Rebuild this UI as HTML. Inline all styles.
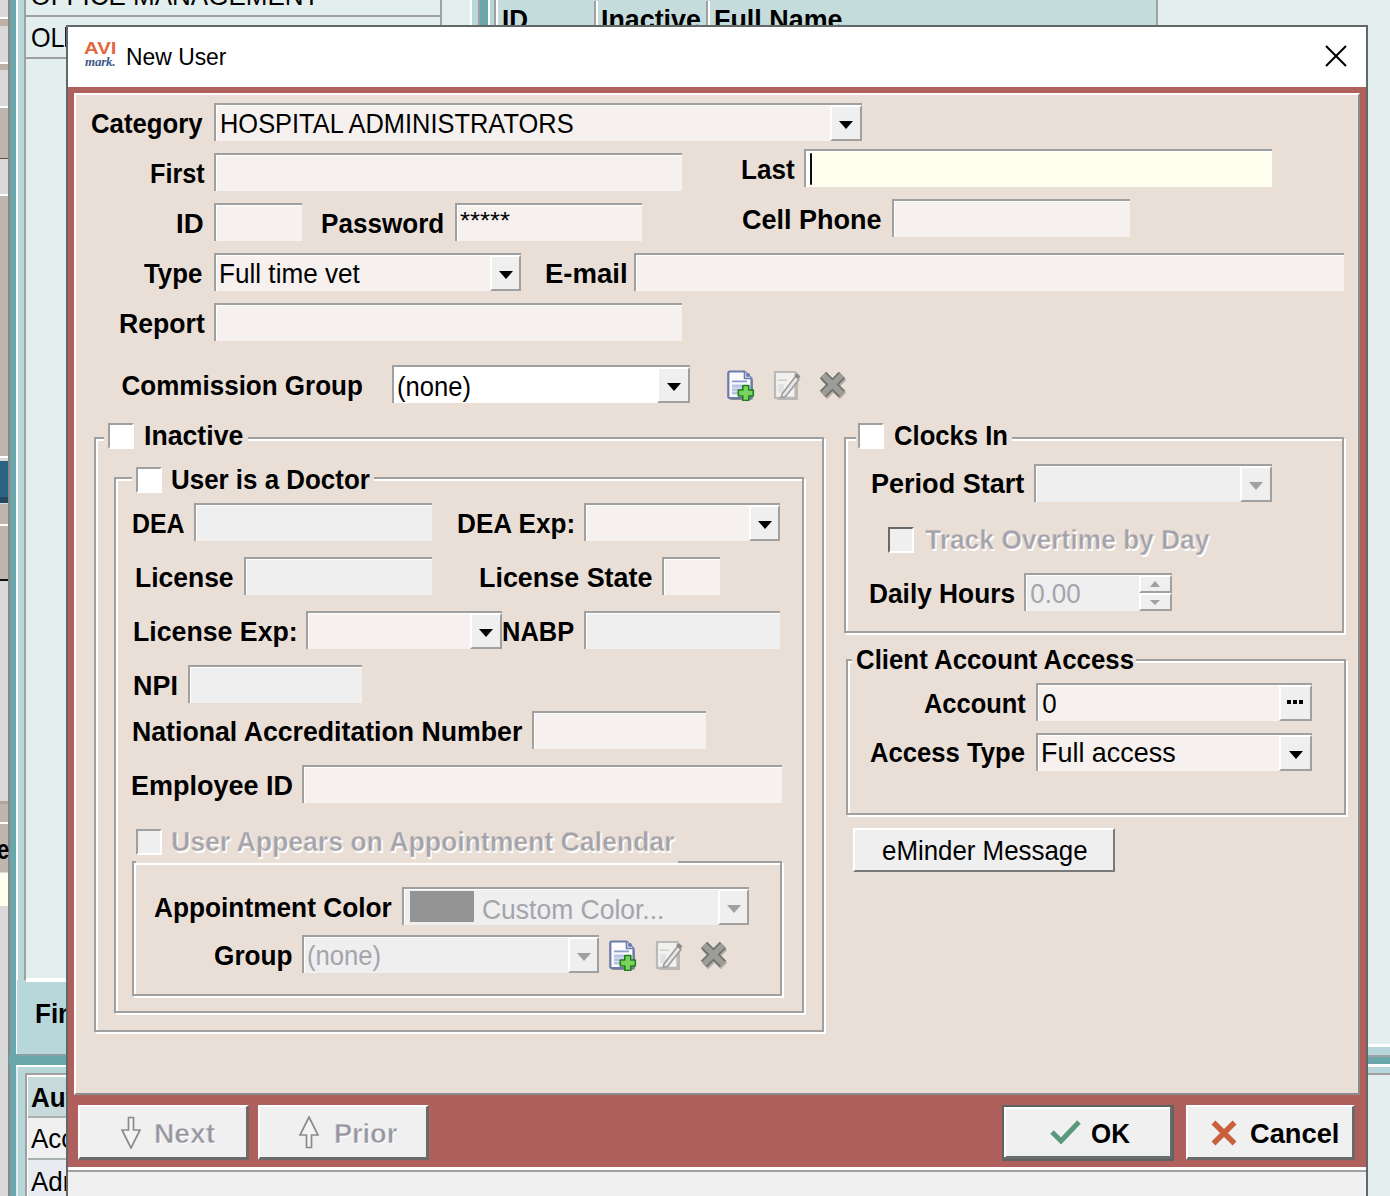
<!DOCTYPE html>
<html><head><meta charset="utf-8"><style>
html,body{margin:0;padding:0;}
body{width:1390px;height:1196px;overflow:hidden;position:relative;font-family:"Liberation Sans",sans-serif;}
.a{position:absolute;}
.t{position:absolute;white-space:nowrap;font-family:"Liberation Sans",sans-serif;}
</style></head><body>
<div class="a" style="left:0px;top:0px;width:1390px;height:1196px;background:#e3efef;"></div>
<div class="a" style="left:0px;top:0px;width:9px;height:1196px;background:#d9d9d9;"></div>
<div class="a" style="left:0px;top:19px;width:9px;height:7px;background:#bcb0a8;"></div>
<div class="a" style="left:0px;top:63px;width:9px;height:7px;background:#bcb0a8;"></div>
<div class="a" style="left:0px;top:107px;width:9px;height:51px;background:#c0b6b0;"></div>
<div class="a" style="left:0px;top:196px;width:9px;height:260px;background:#c0b6b0;"></div>
<div class="a" style="left:0px;top:461px;width:9px;height:42px;background:#2a6282;"></div>
<div class="a" style="left:0px;top:497px;width:9px;height:6px;background:#1f4a62;"></div>
<div class="a" style="left:0px;top:504px;width:9px;height:75px;background:#c0b6b0;"></div>
<div class="a" style="left:0px;top:801px;width:9px;height:3px;background:#b0a49c;"></div>
<div class="a" style="left:0px;top:804px;width:9px;height:68px;background:#c0b6b0;"></div>
<div class="a" style="left:0px;top:873px;width:9px;height:33px;background:#fffff0;"></div>
<div class="a" style="left:0px;top:17px;width:9px;height:2px;background:#fff;"></div>
<div class="a" style="left:0px;top:62px;width:9px;height:2px;background:#fff;"></div>
<div class="a" style="left:0px;top:106px;width:9px;height:2px;background:#fff;"></div>
<div class="a" style="left:0px;top:194px;width:9px;height:2px;background:#fff;"></div>
<div class="a" style="left:0px;top:456px;width:9px;height:2px;background:#fff;"></div>
<div class="a" style="left:0px;top:524px;width:9px;height:2px;background:#fff;"></div>
<div class="a" style="left:0px;top:822px;width:9px;height:2px;background:#fff;"></div>
<div class="a" style="left:0px;top:158px;width:9px;height:1px;background:#555;"></div>
<div class="a" style="left:0px;top:579px;width:9px;height:2px;background:#111;"></div>
<div class="a" style="left:8px;top:0px;width:2px;height:1196px;background:#8c8484;"></div>
<div class="t" style="left:-2.85px;top:836.5px;font-size:26px;line-height:26px;font-weight:bold;color:#000;transform:scaleX(0.8462) scaleY(1.080);transform-origin:0 22.0px;">e</div>
<div class="a" style="left:10px;top:0px;width:6px;height:1196px;background:#6aa7ab;"></div>
<div class="a" style="left:16px;top:0px;width:2px;height:1054px;background:#fff;"></div>
<div class="a" style="left:18px;top:0px;width:6px;height:1054px;background:#b8d7da;"></div>
<div class="a" style="left:24px;top:0px;width:2px;height:980px;background:#a0a0a0;"></div>
<div class="a" style="left:26px;top:0px;width:414px;height:980px;background:#e3efef;"></div>
<div class="a" style="left:26px;top:978px;width:416px;height:2px;background:#fff;"></div>
<div class="a" style="left:440px;top:0px;width:2px;height:980px;background:#a0a0a0;"></div>
<div class="a" style="left:26px;top:15px;width:414px;height:2px;background:#a0a0a0;"></div>
<div class="a" style="left:26px;top:57px;width:414px;height:2px;background:#a0a0a0;"></div>
<div class="t" style="left:30.50px;top:-17.0px;font-size:26px;line-height:26px;color:#000;transform:scaleY(1.080);transform-origin:0 22.0px;">OFFICE MANAGEMENT</div>
<div class="t" style="left:30.83px;top:24.5px;font-size:26px;line-height:26px;color:#000;transform:scaleX(0.9697) scaleY(1.080);transform-origin:0 22.0px;">OL</div>
<div class="a" style="left:65px;top:27px;width:2px;height:20px;background:#20203a;"></div>
<div class="a" style="left:17px;top:980px;width:49px;height:74px;background:#b8d7da;"></div>
<div class="a" style="left:26px;top:980px;width:40px;height:2px;background:#fff;"></div>
<div class="t" style="left:35.00px;top:1000.5px;font-size:26px;line-height:26px;font-weight:bold;color:#000;transform:scaleY(1.080);transform-origin:0 22.0px;">Find</div>
<div class="a" style="left:9px;top:1054px;width:58px;height:11px;background:#6aa7ab;"></div>
<div class="a" style="left:17px;top:1054px;width:50px;height:2px;background:#8aa0a4;"></div>
<div class="a" style="left:16px;top:1065px;width:51px;height:2px;background:#fff;"></div>
<div class="a" style="left:18px;top:1067px;width:49px;height:129px;background:#b8d7da;"></div>
<div class="a" style="left:25px;top:1073px;width:42px;height:2px;background:#a0a0a0;"></div>
<div class="a" style="left:25px;top:1073px;width:2px;height:123px;background:#a0a0a0;"></div>
<div class="a" style="left:27px;top:1075px;width:40px;height:2px;background:#fff;"></div>
<div class="a" style="left:27px;top:1075px;width:1px;height:121px;background:#fff;"></div>
<div class="a" style="left:28px;top:1077px;width:39px;height:39px;background:#c8d9dc;"></div>
<div class="a" style="left:28px;top:1116px;width:39px;height:2px;background:#a8b0b0;"></div>
<div class="a" style="left:28px;top:1118px;width:39px;height:40px;background:#f0f0f0;"></div>
<div class="a" style="left:28px;top:1158px;width:39px;height:2px;background:#a8b0b0;"></div>
<div class="a" style="left:28px;top:1160px;width:39px;height:36px;background:#e8ecf0;"></div>
<div class="t" style="left:31.00px;top:1084.5px;font-size:26px;line-height:26px;font-weight:bold;color:#000;transform:scaleY(1.080);transform-origin:0 22.0px;">Auth</div>
<div class="t" style="left:31.00px;top:1126.0px;font-size:26px;line-height:26px;color:#000;transform:scaleY(1.080);transform-origin:0 22.0px;">Acc</div>
<div class="t" style="left:31.00px;top:1168.5px;font-size:26px;line-height:26px;color:#000;transform:scaleY(1.080);transform-origin:0 22.0px;">Adr</div>
<div class="a" style="left:442px;top:0px;width:28px;height:26px;background:#e3efef;"></div>
<div class="a" style="left:470px;top:0px;width:2px;height:26px;background:#fff;"></div>
<div class="a" style="left:472px;top:0px;width:6px;height:26px;background:#b8d7da;"></div>
<div class="a" style="left:478px;top:0px;width:2px;height:26px;background:#a0a0a0;"></div>
<div class="a" style="left:480px;top:0px;width:8px;height:26px;background:#6aa7ab;"></div>
<div class="a" style="left:488px;top:0px;width:2px;height:26px;background:#fff;"></div>
<div class="a" style="left:490px;top:0px;width:4px;height:26px;background:#b8d7da;"></div>
<div class="a" style="left:494px;top:0px;width:2px;height:26px;background:#a0a0a0;"></div>
<div class="a" style="left:496px;top:0px;width:2px;height:26px;background:#fff;"></div>
<div class="a" style="left:498px;top:0px;width:658px;height:26px;background:#c4dcdc;"></div>
<div class="a" style="left:1156px;top:0px;width:2px;height:26px;background:#a0a0a0;"></div>
<div class="a" style="left:594px;top:1px;width:2px;height:25px;background:#a0a0a0;"></div>
<div class="a" style="left:596px;top:1px;width:2px;height:25px;background:#fff;"></div>
<div class="a" style="left:706px;top:1px;width:2px;height:25px;background:#a0a0a0;"></div>
<div class="a" style="left:708px;top:1px;width:2px;height:25px;background:#fff;"></div>
<div class="t" style="left:502.00px;top:7.0px;font-size:26px;line-height:26px;font-weight:bold;color:#000;transform:scaleY(1.080);transform-origin:0 22.0px;">ID</div>
<div class="t" style="left:600.94px;top:7.0px;font-size:26px;line-height:26px;font-weight:bold;color:#000;transform:scaleX(1.0319) scaleY(1.080);transform-origin:0 22.0px;">Inactive</div>
<div class="t" style="left:714.43px;top:7.0px;font-size:26px;line-height:26px;font-weight:bold;color:#000;transform:scaleX(1.0347) scaleY(1.080);transform-origin:0 22.0px;">Full Name</div>
<div class="a" style="left:1368px;top:1044px;width:22px;height:3px;background:#fff;"></div>
<div class="a" style="left:1368px;top:1047px;width:22px;height:8px;background:#b8d7da;"></div>
<div class="a" style="left:1368px;top:1055px;width:22px;height:2px;background:#a0a0a0;"></div>
<div class="a" style="left:1368px;top:1057px;width:22px;height:7px;background:#6aa7ab;"></div>
<div class="a" style="left:1368px;top:1064px;width:22px;height:3px;background:#fff;"></div>
<div class="a" style="left:1368px;top:1067px;width:22px;height:6px;background:#b8d7da;"></div>
<div class="a" style="left:1368px;top:1073px;width:22px;height:2px;background:#a0a0a0;"></div>
<div class="a" style="left:66px;top:25px;width:1302px;height:1171px;background:#626868;"></div>
<div class="a" style="left:68px;top:27px;width:1298px;height:60px;background:#fff;"></div>
<div class="a" style="left:68px;top:87px;width:1298px;height:1080px;background:#b0605c;"></div>
<div class="a" style="left:68px;top:1167px;width:1298px;height:29px;background:#f0f0f0;border-top:3px solid #fff;box-sizing:border-box;"></div>
<div class="a" style="left:68px;top:1170px;width:1298px;height:2px;background:#a0a0a0;"></div>
<div class="t" style="left:83.93px;top:41.1px;font-size:16px;line-height:16px;font-weight:bold;color:#e2683f;transform:scaleX(1.2739) scaleY(1.020);transform-origin:0 13.5px;">AVI</div>
<div class="t" style="left:85px;top:55px;font:italic bold 13px/13px 'Liberation Serif',serif;color:#3d5a8a;letter-spacing:-0.2px">mark.</div>
<div class="t" style="left:125.89px;top:44.599999999999994px;font-size:24px;line-height:24px;color:#000;transform:scaleX(0.9534);transform-origin:0 20.5px;">New User</div>
<svg class="a" style="left:1325px;top:45px" width="22" height="22"><path d="M1 1L21 21M21 1L1 21" stroke="#000" stroke-width="2"/></svg>
<div class="a" style="left:74px;top:93px;width:1286px;height:1002px;background:#e9dfd7;border-top:2px solid #fff;border-left:2px solid #fff;border-right:2px solid #8c8c8c;border-bottom:2px solid #8c8c8c;box-sizing:border-box;"></div>
<div class="t" style="left:90.71px;top:111.0px;font-size:26px;line-height:26px;font-weight:bold;color:#000;transform:scaleX(0.9893) scaleY(1.080);transform-origin:0 22.0px;">Category</div>
<div class="a" style="left:214px;top:103px;width:648px;height:38px;background:#f6f1ee;border-top:2px solid #a0a0a0;border-left:2px solid #a0a0a0;box-sizing:border-box;box-shadow:inset 1px 1px 0 #fff;"></div>
<div class="a" style="left:830px;top:105px;width:32px;height:36px;background:#efefef;border-top:2px solid #fff;border-left:2px solid #fff;border-right:2px solid #a0a0a0;border-bottom:2px solid #a0a0a0;box-sizing:border-box;"></div>
<svg class="a" style="left:839.0px;top:120.5px" width="14" height="8"><path d="M0 0H14L7.0 8Z" fill="#000"/></svg>
<div class="t" style="left:219.57px;top:111.5px;font-size:25px;line-height:25px;color:#000;transform:scaleX(1.0168) scaleY(1.100);transform-origin:0 21.5px;">HOSPITAL ADMINISTRATORS</div>
<div class="t" style="left:149.56px;top:161.0px;font-size:26px;line-height:26px;font-weight:bold;color:#000;transform:scaleX(0.9704) scaleY(1.080);transform-origin:0 22.0px;">First</div>
<div class="a" style="left:214px;top:153px;width:468px;height:38px;background:#f6f1ee;border-top:2px solid #a0a0a0;border-left:2px solid #a0a0a0;box-sizing:border-box;box-shadow:inset 1px 1px 0 #fff;"></div>
<div class="t" style="left:740.79px;top:157.3px;font-size:26px;line-height:26px;font-weight:bold;color:#000;transform:scaleX(1.0039) scaleY(1.080);transform-origin:0 22.0px;">Last</div>
<div class="a" style="left:804px;top:149px;width:468px;height:38px;background:#fffff0;border-top:2px solid #a0a0a0;border-left:2px solid #a0a0a0;box-sizing:border-box;box-shadow:inset 1px 1px 0 #fff;"></div>
<div class="a" style="left:810px;top:153px;width:2px;height:32px;background:#0a0a1a;border-radius:1px;"></div>
<div class="t" style="left:176.48px;top:210.7px;font-size:26px;line-height:26px;font-weight:bold;color:#000;transform:scaleX(1.0609) scaleY(1.080);transform-origin:0 22.0px;">ID</div>
<div class="a" style="left:214px;top:203px;width:88px;height:38px;background:#f6f1ee;border-top:2px solid #a0a0a0;border-left:2px solid #a0a0a0;box-sizing:border-box;box-shadow:inset 1px 1px 0 #fff;"></div>
<div class="t" style="left:321.29px;top:210.7px;font-size:26px;line-height:26px;font-weight:bold;color:#000;transform:scaleX(1.0034) scaleY(1.080);transform-origin:0 22.0px;">Password</div>
<div class="a" style="left:455px;top:203px;width:187px;height:38px;background:#f6f1ee;border-top:2px solid #a0a0a0;border-left:2px solid #a0a0a0;box-sizing:border-box;box-shadow:inset 1px 1px 0 #fff;"></div>
<div class="t" style="left:460.33px;top:208.5px;font-size:24px;line-height:24px;color:#000;transform:scaleX(1.0711);transform-origin:0 20.5px;">*****</div>
<div class="t" style="left:741.76px;top:207.0px;font-size:26px;line-height:26px;font-weight:bold;color:#000;transform:scaleX(1.0391) scaleY(1.080);transform-origin:0 22.0px;">Cell Phone</div>
<div class="a" style="left:892px;top:199px;width:238px;height:38px;background:#f6f1ee;border-top:2px solid #a0a0a0;border-left:2px solid #a0a0a0;box-sizing:border-box;box-shadow:inset 1px 1px 0 #fff;"></div>
<div class="t" style="left:143.50px;top:260.5px;font-size:26px;line-height:26px;font-weight:bold;color:#000;transform:scaleX(0.9914) scaleY(1.080);transform-origin:0 22.0px;">Type</div>
<div class="a" style="left:214px;top:253px;width:307px;height:38px;background:#f6f1ee;border-top:2px solid #a0a0a0;border-left:2px solid #a0a0a0;box-sizing:border-box;box-shadow:inset 1px 1px 0 #fff;"></div>
<div class="a" style="left:490px;top:255px;width:31px;height:36px;background:#efefef;border-top:2px solid #fff;border-left:2px solid #fff;border-right:2px solid #a0a0a0;border-bottom:2px solid #a0a0a0;box-sizing:border-box;"></div>
<svg class="a" style="left:498.5px;top:270.5px" width="14" height="8"><path d="M0 0H14L7.0 8Z" fill="#000"/></svg>
<div class="t" style="left:218.59px;top:261.0px;font-size:26px;line-height:26px;color:#000;transform:scaleX(1.0051) scaleY(1.080);transform-origin:0 22.0px;">Full time vet</div>
<div class="t" style="left:544.68px;top:260.8px;font-size:26px;line-height:26px;font-weight:bold;color:#000;transform:scaleX(1.0595) scaleY(1.080);transform-origin:0 22.0px;">E-mail</div>
<div class="a" style="left:634px;top:253px;width:710px;height:38px;background:#f6f1ee;border-top:2px solid #a0a0a0;border-left:2px solid #a0a0a0;box-sizing:border-box;box-shadow:inset 1px 1px 0 #fff;"></div>
<div class="t" style="left:118.95px;top:310.7px;font-size:26px;line-height:26px;font-weight:bold;color:#000;transform:scaleX(1.0235) scaleY(1.080);transform-origin:0 22.0px;">Report</div>
<div class="a" style="left:214px;top:303px;width:468px;height:38px;background:#f6f1ee;border-top:2px solid #a0a0a0;border-left:2px solid #a0a0a0;box-sizing:border-box;box-shadow:inset 1px 1px 0 #fff;"></div>
<div class="t" style="left:121.60px;top:372.7px;font-size:26px;line-height:26px;font-weight:bold;color:#000;transform:scaleY(1.080);transform-origin:0 22.0px;">Commission Group</div>
<div class="a" style="left:392px;top:365px;width:298px;height:38px;background:#fff;border-top:2px solid #a0a0a0;border-left:2px solid #a0a0a0;box-sizing:border-box;box-shadow:inset 1px 1px 0 #fff;"></div>
<div class="a" style="left:657px;top:367px;width:33px;height:36px;background:#efefef;border-top:2px solid #fff;border-left:2px solid #fff;border-right:2px solid #a0a0a0;border-bottom:2px solid #a0a0a0;box-sizing:border-box;"></div>
<svg class="a" style="left:666.5px;top:382.5px" width="14" height="8"><path d="M0 0H14L7.0 8Z" fill="#000"/></svg>
<div class="t" style="left:396.93px;top:373.5px;font-size:26px;line-height:26px;color:#000;transform:scaleX(0.9847) scaleY(1.080);transform-origin:0 22.0px;">(none)</div>
<svg class="a" style="left:727px;top:370px" width="30" height="31" viewBox="0 0 30 31">
<path d="M4.5 3.5H19L26 10.5V28Q26 30 24 30H4.5Q3 30 3 28.5V5Q3 3.5 4.5 3.5Z" fill="rgba(0,0,0,0.35)"/>
<path d="M3 1.5H17.5L24.5 8.5V26.5Q24.5 28.2 22.8 28.2H3Q1.3 28.2 1.3 26.5V3.2Q1.3 1.5 3 1.5Z" fill="#fbfbfd" stroke="#6b7bab" stroke-width="2.2"/>
<path d="M17.5 1.5V8.5H24.5" fill="#dfe6f5" stroke="#6b7bab" stroke-width="1.6"/>
<circle cx="21" cy="5" r="2" fill="#6b7bab"/>
<rect x="5" y="10.5" width="15" height="1.8" fill="#8d9bcf"/>
<rect x="5" y="14.5" width="10" height="10" fill="#b9c3e3"/>
<rect x="5" y="17.5" width="10" height="1" fill="#dfe4f3"/>
<rect x="5" y="21" width="10" height="1" fill="#dfe4f3"/>
<path d="M15.8 15.5H21.8V20H26.3V26H21.8V30.5H15.8V26H11.3V20H15.8Z" fill="#7ad35a" stroke="#1f7d1f" stroke-width="1.6" stroke-linejoin="round"/>
</svg>
<svg class="a" style="left:773px;top:370px" width="29" height="31" viewBox="0 0 29 31">
<path d="M4 4H25V30H4Z" fill="rgba(0,0,0,0.18)"/>
<path d="M2 2H22.5V27.8H2Z" fill="#f3f1ed" stroke="#b9b9b9" stroke-width="2.2"/>
<rect x="5" y="9.5" width="9" height="1.5" fill="#cfcfcf"/>
<rect x="5" y="14" width="6" height="9" fill="#e2e2e2"/>
<path d="M9 24L22.5 6.5L26 9.5L12.5 26.5L8.2 27.5Z" fill="#e6e6e6" stroke="#9c9c9c" stroke-width="1.6" stroke-linejoin="round"/>
<path d="M21.5 5.5L24 3L27.5 6.5L25 9Z" fill="#8a8a8a"/>
</svg>
<svg class="a" style="left:818px;top:370px" width="30" height="30" viewBox="0 0 30 30">
<path d="M6 7L25 26M25 7L6 26" stroke="rgba(0,0,0,0.22)" stroke-width="9"/>
<path d="M5 5L24 24M24 5L5 24" stroke="#6e6e6a" stroke-width="9"/>
<path d="M5 5L24 24M24 5L5 24" stroke="#9d9d98" stroke-width="6"/>
</svg>
<div class="a" style="left:96px;top:439px;width:730px;height:595px;border:2px solid #fff;box-sizing:border-box;"></div>
<div class="a" style="left:94px;top:437px;width:730px;height:595px;border:2px solid #a0a0a0;box-sizing:border-box;"></div>
<div class="a" style="left:104px;top:420px;width:144px;height:30px;background:#e9dfd7;"></div>
<div class="a" style="left:108px;top:423px;width:26px;height:26px;background:#fff;border-top:2px solid #a0a0a0;border-left:2px solid #a0a0a0;border-right:2px solid #fff;border-bottom:2px solid #fff;box-sizing:border-box;"></div>
<div class="t" style="left:144.15px;top:423.0px;font-size:26px;line-height:26px;font-weight:bold;color:#000;transform:scaleX(1.0255) scaleY(1.080);transform-origin:0 22.0px;">Inactive</div>
<div class="a" style="left:116px;top:479px;width:690px;height:536px;border:2px solid #fff;box-sizing:border-box;"></div>
<div class="a" style="left:114px;top:477px;width:690px;height:536px;border:2px solid #a0a0a0;box-sizing:border-box;"></div>
<div class="a" style="left:132px;top:462px;width:242px;height:30px;background:#e9dfd7;"></div>
<div class="a" style="left:136px;top:467px;width:26px;height:26px;background:#fff;border-top:2px solid #a0a0a0;border-left:2px solid #a0a0a0;border-right:2px solid #fff;border-bottom:2px solid #fff;box-sizing:border-box;"></div>
<div class="t" style="left:171.41px;top:467.2px;font-size:26px;line-height:26px;font-weight:bold;color:#000;transform:scaleX(0.9970) scaleY(1.080);transform-origin:0 22.0px;">User is a Doctor</div>
<div class="t" style="left:131.78px;top:510.9px;font-size:26px;line-height:26px;font-weight:bold;color:#000;transform:scaleX(0.9577) scaleY(1.080);transform-origin:0 22.0px;">DEA</div>
<div class="a" style="left:194px;top:503px;width:238px;height:38px;background:#efefef;border-top:2px solid #a0a0a0;border-left:2px solid #a0a0a0;box-sizing:border-box;box-shadow:inset 1px 1px 0 #fff;"></div>
<div class="t" style="left:457.39px;top:510.9px;font-size:26px;line-height:26px;font-weight:bold;color:#000;transform:scaleX(1.0062) scaleY(1.080);transform-origin:0 22.0px;">DEA Exp:</div>
<div class="a" style="left:584px;top:503px;width:196px;height:38px;background:#f6f1ee;border-top:2px solid #a0a0a0;border-left:2px solid #a0a0a0;box-sizing:border-box;box-shadow:inset 1px 1px 0 #fff;"></div>
<div class="a" style="left:749px;top:505px;width:31px;height:36px;background:#efefef;border-top:2px solid #fff;border-left:2px solid #fff;border-right:2px solid #a0a0a0;border-bottom:2px solid #a0a0a0;box-sizing:border-box;"></div>
<svg class="a" style="left:757.5px;top:520.5px" width="14" height="8"><path d="M0 0H14L7.0 8Z" fill="#000"/></svg>
<div class="t" style="left:135.06px;top:564.9px;font-size:26px;line-height:26px;font-weight:bold;color:#000;transform:scaleX(1.0181) scaleY(1.080);transform-origin:0 22.0px;">License</div>
<div class="a" style="left:244px;top:557px;width:188px;height:38px;background:#efefef;border-top:2px solid #a0a0a0;border-left:2px solid #a0a0a0;box-sizing:border-box;box-shadow:inset 1px 1px 0 #fff;"></div>
<div class="t" style="left:478.93px;top:564.9px;font-size:26px;line-height:26px;font-weight:bold;color:#000;transform:scaleX(1.0345) scaleY(1.080);transform-origin:0 22.0px;">License State</div>
<div class="a" style="left:662px;top:557px;width:58px;height:38px;background:#f6f1ee;border-top:2px solid #a0a0a0;border-left:2px solid #a0a0a0;box-sizing:border-box;box-shadow:inset 1px 1px 0 #fff;"></div>
<div class="t" style="left:132.95px;top:619.0px;font-size:26px;line-height:26px;font-weight:bold;color:#000;transform:scaleX(1.0269) scaleY(1.080);transform-origin:0 22.0px;">License Exp:</div>
<div class="a" style="left:306px;top:611px;width:196px;height:38px;background:#f6f1ee;border-top:2px solid #a0a0a0;border-left:2px solid #a0a0a0;box-sizing:border-box;box-shadow:inset 1px 1px 0 #fff;"></div>
<div class="a" style="left:470px;top:613px;width:32px;height:36px;background:#efefef;border-top:2px solid #fff;border-left:2px solid #fff;border-right:2px solid #a0a0a0;border-bottom:2px solid #a0a0a0;box-sizing:border-box;"></div>
<svg class="a" style="left:479.0px;top:628.5px" width="14" height="8"><path d="M0 0H14L7.0 8Z" fill="#000"/></svg>
<div class="t" style="left:501.64px;top:618.8px;font-size:26px;line-height:26px;font-weight:bold;color:#000;transform:scaleX(0.9789) scaleY(1.080);transform-origin:0 22.0px;">NABP</div>
<div class="a" style="left:584px;top:611px;width:196px;height:38px;background:#efefef;border-top:2px solid #a0a0a0;border-left:2px solid #a0a0a0;box-sizing:border-box;box-shadow:inset 1px 1px 0 #fff;"></div>
<div class="t" style="left:133.33px;top:673.0px;font-size:26px;line-height:26px;font-weight:bold;color:#000;transform:scaleX(1.0350) scaleY(1.080);transform-origin:0 22.0px;">NPI</div>
<div class="a" style="left:188px;top:665px;width:174px;height:38px;background:#efefef;border-top:2px solid #a0a0a0;border-left:2px solid #a0a0a0;box-sizing:border-box;box-shadow:inset 1px 1px 0 #fff;"></div>
<div class="t" style="left:132.15px;top:718.8px;font-size:26px;line-height:26px;font-weight:bold;color:#000;transform:scaleX(1.0259) scaleY(1.080);transform-origin:0 22.0px;">National Accreditation Number</div>
<div class="a" style="left:532px;top:711px;width:174px;height:38px;background:#f6f1ee;border-top:2px solid #a0a0a0;border-left:2px solid #a0a0a0;box-sizing:border-box;box-shadow:inset 1px 1px 0 #fff;"></div>
<div class="t" style="left:131.32px;top:773.3px;font-size:26px;line-height:26px;font-weight:bold;color:#000;transform:scaleX(1.0379) scaleY(1.080);transform-origin:0 22.0px;">Employee ID</div>
<div class="a" style="left:302px;top:765px;width:480px;height:38px;background:#f6f1ee;border-top:2px solid #a0a0a0;border-left:2px solid #a0a0a0;box-sizing:border-box;box-shadow:inset 1px 1px 0 #fff;"></div>
<div class="a" style="left:134px;top:863px;width:650px;height:135px;border:2px solid #fff;box-sizing:border-box;"></div>
<div class="a" style="left:132px;top:861px;width:650px;height:135px;border:2px solid #a0a0a0;box-sizing:border-box;"></div>
<div class="a" style="left:136px;top:826px;width:542px;height:37px;background:#e9dfd7;"></div>
<div class="a" style="left:136px;top:829px;width:26px;height:26px;background:#efefef;border-top:2px solid #a0a0a0;border-left:2px solid #a0a0a0;border-right:2px solid #fff;border-bottom:2px solid #fff;box-sizing:border-box;"></div>
<div class="t" style="left:171.25px;top:829.0px;font-size:26px;line-height:26px;font-weight:bold;color:#a2a2aa;text-shadow:1.5px 1.5px 0 #fff;-webkit-text-stroke:0.5px #e9dfd7;transform:scaleX(1.0229) scaleY(1.080);transform-origin:0 22.0px;">User Appears on Appointment Calendar</div>
<div class="t" style="left:153.69px;top:894.8px;font-size:26px;line-height:26px;font-weight:bold;color:#000;transform:scaleX(1.0098) scaleY(1.080);transform-origin:0 22.0px;">Appointment Color</div>
<div class="a" style="left:402px;top:887px;width:347px;height:38px;background:#efefef;border-top:2px solid #a0a0a0;border-left:2px solid #a0a0a0;box-sizing:border-box;box-shadow:inset 1px 1px 0 #fff;"></div>
<div class="a" style="left:718px;top:889px;width:31px;height:36px;background:#efefef;border-top:2px solid #fff;border-left:2px solid #fff;border-right:2px solid #a0a0a0;border-bottom:2px solid #a0a0a0;box-sizing:border-box;"></div>
<svg class="a" style="left:726.5px;top:904.5px" width="14" height="8"><path d="M0 0H14L7.0 8Z" fill="#a0a0a0"/></svg>
<div class="a" style="left:410px;top:891px;width:64px;height:31px;background:#949494;"></div>
<div class="t" style="left:481.78px;top:896.5px;font-size:26px;line-height:26px;color:#a4a4ac;transform:scaleX(1.0182) scaleY(1.080);transform-origin:0 22.0px;">Custom Color...</div>
<div class="t" style="left:213.79px;top:943.0px;font-size:26px;line-height:26px;font-weight:bold;color:#000;transform:scaleX(1.0079) scaleY(1.080);transform-origin:0 22.0px;">Group</div>
<div class="a" style="left:302px;top:935px;width:297px;height:38px;background:#efefef;border-top:2px solid #a0a0a0;border-left:2px solid #a0a0a0;box-sizing:border-box;box-shadow:inset 1px 1px 0 #fff;"></div>
<div class="a" style="left:568px;top:937px;width:31px;height:36px;background:#efefef;border-top:2px solid #fff;border-left:2px solid #fff;border-right:2px solid #a0a0a0;border-bottom:2px solid #a0a0a0;box-sizing:border-box;"></div>
<svg class="a" style="left:576.5px;top:952.5px" width="14" height="8"><path d="M0 0H14L7.0 8Z" fill="#a0a0a0"/></svg>
<div class="t" style="left:306.63px;top:942.5px;font-size:26px;line-height:26px;color:#a4a4ac;transform:scaleX(0.9861) scaleY(1.080);transform-origin:0 22.0px;">(none)</div>
<svg class="a" style="left:609px;top:940px" width="30" height="31" viewBox="0 0 30 31">
<path d="M4.5 3.5H19L26 10.5V28Q26 30 24 30H4.5Q3 30 3 28.5V5Q3 3.5 4.5 3.5Z" fill="rgba(0,0,0,0.35)"/>
<path d="M3 1.5H17.5L24.5 8.5V26.5Q24.5 28.2 22.8 28.2H3Q1.3 28.2 1.3 26.5V3.2Q1.3 1.5 3 1.5Z" fill="#fbfbfd" stroke="#6b7bab" stroke-width="2.2"/>
<path d="M17.5 1.5V8.5H24.5" fill="#dfe6f5" stroke="#6b7bab" stroke-width="1.6"/>
<circle cx="21" cy="5" r="2" fill="#6b7bab"/>
<rect x="5" y="10.5" width="15" height="1.8" fill="#8d9bcf"/>
<rect x="5" y="14.5" width="10" height="10" fill="#b9c3e3"/>
<rect x="5" y="17.5" width="10" height="1" fill="#dfe4f3"/>
<rect x="5" y="21" width="10" height="1" fill="#dfe4f3"/>
<path d="M15.8 15.5H21.8V20H26.3V26H21.8V30.5H15.8V26H11.3V20H15.8Z" fill="#7ad35a" stroke="#1f7d1f" stroke-width="1.6" stroke-linejoin="round"/>
</svg>
<svg class="a" style="left:655px;top:940px" width="29" height="31" viewBox="0 0 29 31">
<path d="M4 4H25V30H4Z" fill="rgba(0,0,0,0.18)"/>
<path d="M2 2H22.5V27.8H2Z" fill="#f3f1ed" stroke="#b9b9b9" stroke-width="2.2"/>
<rect x="5" y="9.5" width="9" height="1.5" fill="#cfcfcf"/>
<rect x="5" y="14" width="6" height="9" fill="#e2e2e2"/>
<path d="M9 24L22.5 6.5L26 9.5L12.5 26.5L8.2 27.5Z" fill="#e6e6e6" stroke="#9c9c9c" stroke-width="1.6" stroke-linejoin="round"/>
<path d="M21.5 5.5L24 3L27.5 6.5L25 9Z" fill="#8a8a8a"/>
</svg>
<svg class="a" style="left:699px;top:940px" width="30" height="30" viewBox="0 0 30 30">
<path d="M6 7L25 26M25 7L6 26" stroke="rgba(0,0,0,0.22)" stroke-width="9"/>
<path d="M5 5L24 24M24 5L5 24" stroke="#6e6e6a" stroke-width="9"/>
<path d="M5 5L24 24M24 5L5 24" stroke="#9d9d98" stroke-width="6"/>
</svg>
<div class="a" style="left:846px;top:439px;width:500px;height:196px;border:2px solid #fff;box-sizing:border-box;"></div>
<div class="a" style="left:844px;top:437px;width:500px;height:196px;border:2px solid #a0a0a0;box-sizing:border-box;"></div>
<div class="a" style="left:856px;top:420px;width:156px;height:30px;background:#e9dfd7;"></div>
<div class="a" style="left:858px;top:423px;width:26px;height:26px;background:#fff;border-top:2px solid #a0a0a0;border-left:2px solid #a0a0a0;border-right:2px solid #fff;border-bottom:2px solid #fff;box-sizing:border-box;"></div>
<div class="t" style="left:893.81px;top:423.0px;font-size:26px;line-height:26px;font-weight:bold;color:#000;transform:scaleX(0.9858) scaleY(1.080);transform-origin:0 22.0px;">Clocks In</div>
<div class="t" style="left:871.12px;top:471.4px;font-size:26px;line-height:26px;font-weight:bold;color:#000;transform:scaleX(1.0400) scaleY(1.080);transform-origin:0 22.0px;">Period Start</div>
<div class="a" style="left:1034px;top:464px;width:238px;height:38px;background:#efefef;border-top:2px solid #a0a0a0;border-left:2px solid #a0a0a0;box-sizing:border-box;box-shadow:inset 1px 1px 0 #fff;"></div>
<div class="a" style="left:1240px;top:466px;width:32px;height:36px;background:#efefef;border-top:2px solid #fff;border-left:2px solid #fff;border-right:2px solid #a0a0a0;border-bottom:2px solid #a0a0a0;box-sizing:border-box;"></div>
<svg class="a" style="left:1249.0px;top:481.5px" width="14" height="8"><path d="M0 0H14L7.0 8Z" fill="#a0a0a0"/></svg>
<div class="a" style="left:888px;top:527px;width:26px;height:26px;background:#efefef;border-top:2px solid #696969;border-left:2px solid #696969;border-right:2px solid #fff;border-bottom:2px solid #fff;box-sizing:border-box;"></div>
<div class="t" style="left:925.40px;top:526.5px;font-size:26px;line-height:26px;font-weight:bold;color:#a2a2aa;text-shadow:1.5px 1.5px 0 #fff;-webkit-text-stroke:0.5px #e9dfd7;transform:scaleX(1.0143) scaleY(1.080);transform-origin:0 22.0px;">Track Overtime by Day</div>
<div class="t" style="left:869.18px;top:581.2px;font-size:26px;line-height:26px;font-weight:bold;color:#000;transform:scaleX(1.0106) scaleY(1.080);transform-origin:0 22.0px;">Daily Hours</div>
<div class="a" style="left:1024px;top:573px;width:148px;height:38px;background:#efefef;border-top:2px solid #a0a0a0;border-left:2px solid #a0a0a0;box-sizing:border-box;box-shadow:inset 1px 1px 0 #fff;"></div>
<div class="t" style="left:1030.20px;top:581.2px;font-size:26px;line-height:26px;color:#a4a4ac;transform:scaleY(1.080);transform-origin:0 22.0px;">0.00</div>
<div class="a" style="left:1139px;top:575px;width:33px;height:18px;background:#efefef;border-top:2px solid #fff;border-left:2px solid #fff;border-right:2px solid #a0a0a0;border-bottom:2px solid #a0a0a0;box-sizing:border-box;"></div>
<div class="a" style="left:1139px;top:593px;width:33px;height:18px;background:#efefef;border-top:2px solid #fff;border-left:2px solid #fff;border-right:2px solid #a0a0a0;border-bottom:2px solid #a0a0a0;box-sizing:border-box;"></div>
<svg class="a" style="left:1150px;top:581px" width="10" height="6"><path d="M0 6H10L5 0Z" fill="#a0a0a0"/></svg>
<svg class="a" style="left:1150.0px;top:599.5px" width="10" height="5"><path d="M0 0H10L5.0 5Z" fill="#a0a0a0"/></svg>
<div class="a" style="left:848px;top:661px;width:500px;height:156px;border:2px solid #fff;box-sizing:border-box;"></div>
<div class="a" style="left:846px;top:659px;width:500px;height:156px;border:2px solid #a0a0a0;box-sizing:border-box;"></div>
<div class="a" style="left:852px;top:645px;width:284px;height:30px;background:#e9dfd7;"></div>
<div class="t" style="left:855.81px;top:646.8px;font-size:26px;line-height:26px;font-weight:bold;color:#000;transform:scaleX(0.9935) scaleY(1.080);transform-origin:0 22.0px;">Client Account Access</div>
<div class="t" style="left:923.62px;top:690.8px;font-size:26px;line-height:26px;font-weight:bold;color:#000;transform:scaleX(0.9786) scaleY(1.080);transform-origin:0 22.0px;">Account</div>
<div class="a" style="left:1036px;top:683px;width:276px;height:38px;background:#f6f1ee;border-top:2px solid #a0a0a0;border-left:2px solid #a0a0a0;box-sizing:border-box;box-shadow:inset 1px 1px 0 #fff;"></div>
<div class="t" style="left:1042.30px;top:690.8px;font-size:26px;line-height:26px;color:#000;transform:scaleY(1.080);transform-origin:0 22.0px;">0</div>
<div class="a" style="left:1279px;top:685px;width:33px;height:36px;background:#efefef;border-top:2px solid #fff;border-left:2px solid #fff;border-right:2px solid #a0a0a0;border-bottom:2px solid #a0a0a0;box-sizing:border-box;"></div>
<div class="a" style="left:1287px;top:700px;width:4px;height:4px;background:#000;"></div>
<div class="a" style="left:1293px;top:700px;width:4px;height:4px;background:#000;"></div>
<div class="a" style="left:1299px;top:700px;width:4px;height:4px;background:#000;"></div>
<div class="t" style="left:869.71px;top:740.3px;font-size:26px;line-height:26px;font-weight:bold;color:#000;transform:scaleX(0.9865) scaleY(1.080);transform-origin:0 22.0px;">Access Type</div>
<div class="a" style="left:1036px;top:733px;width:276px;height:38px;background:#f6f1ee;border-top:2px solid #a0a0a0;border-left:2px solid #a0a0a0;box-sizing:border-box;box-shadow:inset 1px 1px 0 #fff;"></div>
<div class="a" style="left:1279px;top:735px;width:33px;height:36px;background:#efefef;border-top:2px solid #fff;border-left:2px solid #fff;border-right:2px solid #a0a0a0;border-bottom:2px solid #a0a0a0;box-sizing:border-box;"></div>
<svg class="a" style="left:1288.5px;top:750.5px" width="14" height="8"><path d="M0 0H14L7.0 8Z" fill="#000"/></svg>
<div class="t" style="left:1040.73px;top:740.3px;font-size:26px;line-height:26px;color:#000;transform:scaleX(1.0354) scaleY(1.080);transform-origin:0 22.0px;">Full access</div>
<div class="a" style="left:853px;top:828px;width:262px;height:44px;background:#efefef;border-top:2px solid #fff;border-left:2px solid #fff;border-right:2px solid #7a7a7a;border-bottom:2px solid #7a7a7a;box-sizing:border-box;"></div>
<div class="t" style="left:881.87px;top:838.8px;font-size:25px;line-height:25px;color:#000;transform:scaleX(1.0345) scaleY(1.100);transform-origin:0 21.5px;">eMinder Message</div>
<div class="a" style="left:78px;top:1105px;width:171px;height:55px;background:#f0f0f0;border-top:2px solid #fff;border-left:2px solid #fff;border-right:3px solid #6a6a6a;border-bottom:3px solid #6a6a6a;box-sizing:border-box;"></div>
<div class="a" style="left:258px;top:1105px;width:171px;height:55px;background:#f0f0f0;border-top:2px solid #fff;border-left:2px solid #fff;border-right:3px solid #6a6a6a;border-bottom:3px solid #6a6a6a;box-sizing:border-box;"></div>
<svg class="a" style="left:121px;top:1116px" width="20" height="33" viewBox="0 0 20 33"><path d="M7.5 1.5H12.5V14H19L10 32L1 14H7.5Z" fill="#f4f4f4" stroke="#8a8a8a" stroke-width="1.7"/></svg>
<div class="t" style="left:154.33px;top:1121.0px;font-size:26px;line-height:26px;font-weight:bold;color:#96969e;text-shadow:1px 1px 0 #fff;-webkit-text-stroke:0.5px #f0f0f0;transform:scaleX(1.0833) scaleY(1.080);transform-origin:0 22.0px;">Next</div>
<svg class="a" style="left:299px;top:1116px" width="20" height="33" viewBox="0 0 20 33"><path d="M7.5 31.5H12.5V19H19L10 1L1 19H7.5Z" fill="#f4f4f4" stroke="#8a8a8a" stroke-width="1.7"/></svg>
<div class="t" style="left:333.52px;top:1121.0px;font-size:26px;line-height:26px;font-weight:bold;color:#96969e;text-shadow:1px 1px 0 #fff;-webkit-text-stroke:0.5px #f0f0f0;transform:scaleX(1.0414) scaleY(1.080);transform-origin:0 22.0px;">Prior</div>
<div class="a" style="left:1002px;top:1105px;width:172px;height:56px;background:#5f6262;"></div>
<div class="a" style="left:1004px;top:1107px;width:168px;height:52px;background:#f0f0f0;border-top:2px solid #fff;border-left:2px solid #fff;box-sizing:border-box;"></div>
<div class="a" style="left:1170px;top:1107px;width:2px;height:52px;background:#6a6d6d;"></div>
<div class="a" style="left:1004px;top:1156px;width:168px;height:3px;background:#6a6d6d;"></div>
<div class="a" style="left:1004px;top:1107px;width:2px;height:50px;background:#fff;"></div>
<div class="a" style="left:1004px;top:1107px;width:166px;height:2px;background:#fff;"></div>
<svg class="a" style="left:1049px;top:1119px" width="33" height="26" viewBox="0 0 33 26"><path d="M3 13L12 22L30 3" fill="none" stroke="#5a9a7c" stroke-width="5"/></svg>
<div class="t" style="left:1091.40px;top:1120.5px;font-size:26px;line-height:26px;font-weight:bold;color:#000;transform:scaleX(0.9974) scaleY(1.080);transform-origin:0 22.0px;">OK</div>
<div class="a" style="left:1186px;top:1105px;width:169px;height:55px;background:#f0f0f0;border-top:2px solid #fff;border-left:2px solid #fff;border-right:3px solid #6a6a6a;border-bottom:3px solid #6a6a6a;box-sizing:border-box;"></div>
<svg class="a" style="left:1210px;top:1120px" width="28" height="26" viewBox="0 0 28 26"><path d="M3.5 2.5L24.5 23.5M24.5 2.5L3.5 23.5" stroke="#c95f3d" stroke-width="5.5"/></svg>
<div class="t" style="left:1249.65px;top:1120.5px;font-size:26px;line-height:26px;font-weight:bold;color:#000;transform:scaleX(1.0482) scaleY(1.080);transform-origin:0 22.0px;">Cancel</div>
</body></html>
